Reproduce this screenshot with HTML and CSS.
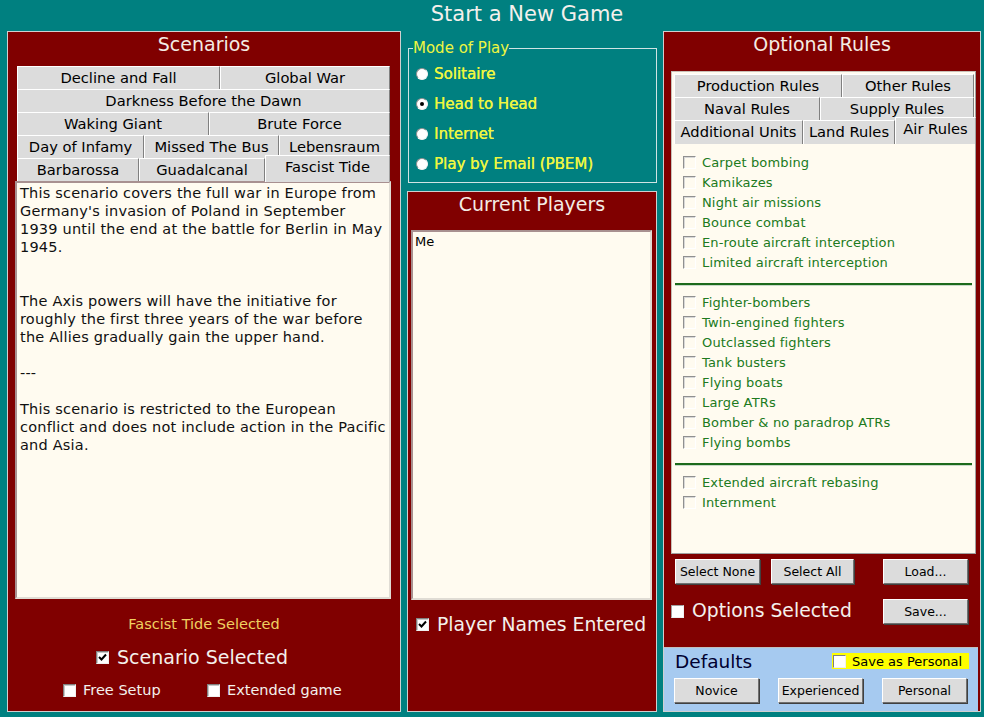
FILE: index.html
```html
<!DOCTYPE html>
<html lang="en">
  <head>
    <meta charset="UTF-8" />
    <meta name="viewport" content="width=device-width, initial-scale=1.0" />
    <title>Start a New Game</title>
    <link rel="stylesheet" href="styles.css">
  </head>
  <body>
    <h1 class="title">Start a New Game</h1>
    <div class="columns">

      <!-- scenario picker -->
      <div class="panel scenarios">
        <h2 class="panel-title">Scenarios</h2>
        <div class="tabs">
          <div class="tab-row sc-row-1">
            <div class="tab">Decline and Fall</div>
            <div class="tab">Global War</div>
          </div>
          <div class="tab-row sc-row-2">
            <div class="tab">Darkness Before the Dawn</div>
          </div>
          <div class="tab-row sc-row-3">
            <div class="tab">Waking Giant</div>
            <div class="tab">Brute Force</div>
          </div>
          <div class="tab-row sc-row-4">
            <div class="tab">Day of Infamy</div>
            <div class="tab">Missed The Bus</div>
            <div class="tab">Lebensraum</div>
          </div>
          <div class="tab-row sc-row-5">
            <div class="tab">Barbarossa</div>
            <div class="tab">Guadalcanal</div>
            <div class="tab active">Fascist Tide</div>
          </div>
        </div>
        <div class="text-box description">
          <p class="gap-2">This scenario covers the full war in Europe from Germany's invasion of Poland in September 1939 until the end at the battle for Berlin in May 1945.</p>
          <p>The Axis powers will have the initiative for roughly the first three years of the war before the Allies gradually gain the upper hand.</p>
          <p>---</p>
          <p>This scenario is restricted to the European conflict and does not include action in the Pacific and Asia.</p>
        </div>
        <div class="chosen">Fascist Tide Selected</div>
        <div class="big-check scenario-done">
          <span class="box checked"><svg viewBox="0 0 11 11"><path d="M2 5 L4.5 7.5 L9 2.5" /></svg></span>
          <span>Scenario Selected</span>
        </div>
        <div class="extra-options">
          <div class="small-check"><span class="box"></span><span>Free Setup</span></div>
          <div class="small-check"><span class="box"></span><span>Extended game</span></div>
        </div>
      </div>

      <div class="middle">
        <fieldset class="mode">
          <legend>Mode of Play</legend>
          <div class="radio"><span class="dot"></span>Solitaire</div>
          <div class="radio"><span class="dot on"></span>Head to Head</div>
          <div class="radio"><span class="dot"></span>Internet</div>
          <div class="radio"><span class="dot"></span>Play by Email (PBEM)</div>
        </fieldset>

        <div class="panel players">
          <h2 class="panel-title">Current Players</h2>
          <div class="text-box player-list">Me</div>
          <div class="big-check names-done">
            <span class="box checked"><svg viewBox="0 0 11 11"><path d="M2 5 L4.5 7.5 L9 2.5" /></svg></span>
            <span>Player Names Entered</span>
          </div>
        </div>
      </div>

      <!-- optional rules -->
      <div class="panel rules">
        <h2 class="panel-title">Optional Rules</h2>
        <div class="rules-box">
          <div class="tabs">
            <div class="tab-row op-row-1">
              <div class="tab">Production Rules</div>
              <div class="tab">Other Rules</div>
            </div>
            <div class="tab-row op-row-2">
              <div class="tab">Naval Rules</div>
              <div class="tab">Supply Rules</div>
            </div>
            <div class="tab-row op-row-3">
              <div class="tab">Additional Units</div>
              <div class="tab">Land Rules</div>
              <div class="tab active">Air Rules</div>
            </div>
          </div>
          <div class="rule-group first">
            <div class="rule"><span class="box"></span>Carpet bombing</div>
            <div class="rule"><span class="box"></span>Kamikazes</div>
            <div class="rule"><span class="box"></span>Night air missions</div>
            <div class="rule"><span class="box"></span>Bounce combat</div>
            <div class="rule"><span class="box"></span>En-route aircraft interception</div>
            <div class="rule"><span class="box"></span>Limited aircraft interception</div>
          </div>
          <div class="rule-sep"></div>
          <div class="rule-group">
            <div class="rule"><span class="box"></span>Fighter-bombers</div>
            <div class="rule"><span class="box"></span>Twin-engined fighters</div>
            <div class="rule"><span class="box"></span>Outclassed fighters</div>
            <div class="rule"><span class="box"></span>Tank busters</div>
            <div class="rule"><span class="box"></span>Flying boats</div>
            <div class="rule"><span class="box"></span>Large ATRs</div>
            <div class="rule"><span class="box"></span>Bomber &amp; no paradrop ATRs</div>
            <div class="rule"><span class="box"></span>Flying bombs</div>
          </div>
          <div class="rule-sep"></div>
          <div class="rule-group">
            <div class="rule"><span class="box"></span>Extended aircraft rebasing</div>
            <div class="rule"><span class="box"></span>Internment</div>
          </div>
        </div>

        <div class="button-row">
          <button class="btn">Select None</button>
          <button class="btn select-all">Select All</button>
          <button class="btn push-right">Load...</button>
        </div>
        <div class="options-row">
          <div class="big-check"><span class="box"></span><span>Options Selected</span></div>
          <button class="btn push-right">Save...</button>
        </div>

        <div class="defaults">
          <div class="defaults-head">
            <span class="defaults-title">Defaults</span>
            <span class="save-personal"><span class="box"></span>Save as Personal</span>
          </div>
          <div class="defaults-buttons">
            <button class="btn">Novice</button>
            <button class="btn">Experienced</button>
            <button class="btn">Personal</button>
          </div>
        </div>
      </div>

    </div>
  </body>
</html>
```

FILE: styles.css
```css
* {
  box-sizing: border-box;
}
body {
  margin: 0;
  width: 984px;
  height: 717px;
  overflow: hidden;
  background: #008080;
  font-family: "DejaVu Sans", Verdana, sans-serif;
  color: #000;
}
.title {
  margin: 0;
  height: 31px;
  padding-left: 70px;
  line-height: 28px;
  font-size: 21px;
  font-weight: normal;
  text-align: center;
  color: #f4f0ec;
}
.columns {
  display: flex;
  gap: 6px;
  padding: 0 3px 0 7px;
  height: 681px;
}
.panel {
  display: flex;
  flex-direction: column;
  background: #800000;
  border: 1px solid #d0d0d0;
}
.panel-title {
  margin: 0 0 10px;
  height: 24px;
  line-height: 24px;
  font-size: 19px;
  font-weight: normal;
  text-align: center;
  color: #f4ece4;
}

/* tab strips */
.tab-row {
  display: grid;
  height: 23px;
}
.tab {
  background: #dcdcdc;
  border-top: 1px solid #fff;
  border-left: 1px solid #fff;
  border-right: 1px solid #808080;
  font-size: 14.7px;
  line-height: 21px;
  text-align: center;
  white-space: nowrap;
}
.tab.active {
  position: relative;
  margin-top: -3px;
  height: 27px;
  line-height: 22px;
  border-right-color: #a0a0a0;
  z-index: 1;
}
.sc-row-1 { grid-template-columns: 203px 1fr; }
.sc-row-2 { grid-template-columns: 1fr; }
.sc-row-3 { grid-template-columns: 192px 1fr; }
.sc-row-4 { grid-template-columns: 127px 135px 1fr; }
.sc-row-5 { grid-template-columns: 122px 126px 1fr; }
.op-row-1 { grid-template-columns: 168px 1fr; }
.op-row-2 { grid-template-columns: 146px 1fr; }
.op-row-3 { grid-template-columns: 129px 92px 1fr; }
.op-row-3 .active { margin-right: -2px; }

.scenarios {
  width: 394px;
}
.scenarios .tabs {
  margin: 0 10px 0 9px;
}
.text-box {
  background: #fffbf0;
  border: 2px solid;
  border-color: #a89090 #e0dcd4 #e0dcd4 #a89090;
}
.description {
  height: 418px;
  margin: 0 9px 0 7px;
  padding: 1px 3px;
  font-size: 14.5px;
  letter-spacing: 0.2px;
  line-height: 18px;
  color: #101010;
}
.description p {
  margin: 0 0 18px;
}
.description p.gap-2 {
  margin-bottom: 36px;
}
.chosen {
  margin-top: 15px;
  line-height: 20px;
  font-size: 14.5px;
  text-align: center;
  color: #f0d060;
}

/* check boxes */
.box {
  flex: none;
  width: 13px;
  height: 13px;
  background: #fff;
  border: 1px solid;
  border-color: #808080 #f0f0f0 #f0f0f0 #808080;
  box-shadow: inset 1px 1px 0 #c8c8c8;
}
.box svg {
  display: block;
  width: 11px;
  height: 11px;
}
.box svg path {
  fill: none;
  stroke: #000;
  stroke-width: 2;
}
.big-check {
  display: flex;
  align-items: center;
  gap: 8px;
  height: 24px;
  font-size: 18.8px;
  color: #f4f0ec;
}
.scenario-done {
  margin-top: 11px;
  padding-left: 88px;
  font-size: 19px;
}
.extra-options {
  display: flex;
  gap: 44px;
  margin-top: 11px;
  padding-left: 55px;
}
.small-check {
  display: flex;
  align-items: center;
  gap: 7px;
  height: 20px;
  font-size: 14.5px;
  color: #f4f0ec;
}
.extra-options .small-check:first-child {
  width: 100px;
}

/* middle column */
.middle {
  display: flex;
  flex-direction: column;
  width: 250px;
}
.mode {
  margin: 8px 0 0 1px;
  padding: 2px 0 3px 4px;
  border: 1px solid #d0e4e4;
  color: #eef640;
  font-size: 15px;
}
.mode legend {
  padding: 0;
  line-height: 18px;
}
.radio {
  display: flex;
  align-items: center;
  gap: 6px;
  height: 30px;
  margin-left: 5px;
  text-shadow: 0.3px 0 0 #eef640;
}
.dot {
  width: 12px;
  height: 12px;
  margin-left: -2px;
  border-radius: 50%;
  background: #fff;
  border: 1px solid;
  border-color: #909090 #f4f4f4 #f4f4f4 #909090;
  display: flex;
  align-items: center;
  justify-content: center;
}
.dot.on::after {
  content: "";
  width: 4px;
  height: 4px;
  border-radius: 50%;
  background: #000;
}
.players {
  flex: 1;
  margin-top: 8px;
}
.players .panel-title {
  margin-bottom: 14px;
}
.player-list {
  height: 370px;
  margin: 0 4px 0 3px;
  padding: 2px 2px;
  font-size: 13px;
  line-height: 16px;
}
.names-done {
  margin-top: 12px;
  padding-left: 8px;
}

/* optional rules */
.rules {
  width: 318px;
}
.rules .panel-title {
  margin-bottom: 15px;
}
.rules-box {
  height: 483px;
  margin: 0 4px 0 7px;
  padding: 2px 1px 0 2px;
  background: #fffbf0;
  border: 1px solid;
  border-color: #c8c0b8 #a0a0a0 #a0a0a0 #c8c0b8;
}
.rule-group {
  padding-left: 9px;
}
.rule-group.first {
  margin-top: 9px;
}
.rule {
  display: flex;
  align-items: center;
  gap: 6px;
  height: 20px;
  font-size: 13px;
  letter-spacing: 0.15px;
  color: #207a20;
}
.rule .box {
  background: #fffbf0;
  border-color: #909090 #fff #fff #909090;
  box-shadow: inset 1px 1px 0 #d8d8d8;
}
.rule-sep {
  height: 3px;
  margin: 11px 2px 6px 1px;
  border-top: 2px solid #1c6a1c;
  border-bottom: 1px solid #c8d8c8;
}

.btn {
  width: 85px;
  height: 25px;
  padding: 0;
  background: #dcdcdc;
  border: 1px solid;
  border-color: #fff #707070 #707070 #fff;
  box-shadow: 1px 1px 0 #404040;
  font-family: inherit;
  font-size: 12.5px;
  color: #000;
}
.button-row {
  display: flex;
  margin-top: 5px;
  padding: 0 12px 0 11px;
}
.select-all {
  width: 83px;
  margin-left: 11px;
}
.push-right {
  margin-left: auto;
}
.options-row {
  display: flex;
  align-items: center;
  margin-top: 15px;
  padding: 0 12px 0 7px;
}
.options-row .big-check span:last-child {
  margin-top: -3px;
}
.options-row .box {
  border-color: #a0a0a0 #f0f0f0 #f0f0f0 #a0a0a0;
  box-shadow: none;
}

.defaults {
  margin: auto 2px 0 0;
  height: 64px;
  background: #a6caf0;
  border-top: 1px solid #c0c0c0;
  padding: 2px 10px 0;
}
.defaults-head {
  display: flex;
  align-items: center;
  justify-content: space-between;
  height: 22px;
  padding-left: 1px;
}
.defaults-title {
  font-size: 18.5px;
  color: #000030;
}
.save-personal {
  display: flex;
  align-items: center;
  gap: 6px;
  width: 137px;
  height: 16px;
  margin-right: -1px;
  padding-left: 1px;
  background: #ffff00;
  font-size: 13px;
}
.save-personal .box {
  box-shadow: none;
}
.defaults-buttons {
  display: flex;
  gap: 19px;
  margin-top: 6px;
}
```
